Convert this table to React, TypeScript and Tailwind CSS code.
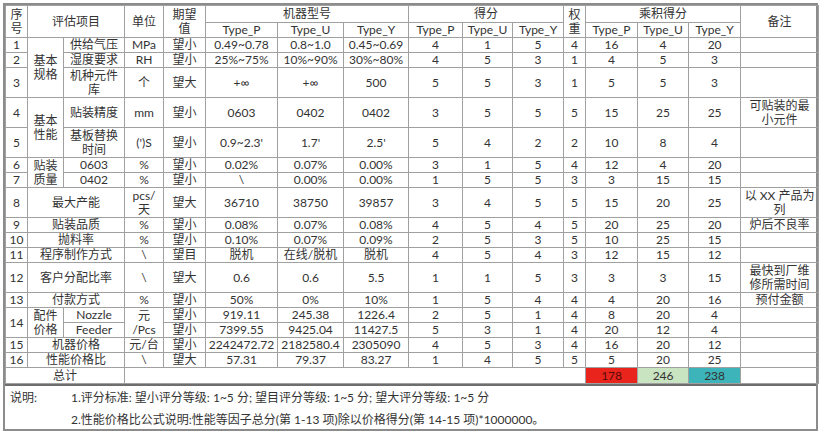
import React from "react";

const FONT = { fontFamily: 'Lato, "Noto Sans CJK SC", sans-serif' };

const td = "border border-[#a0a0a0] p-0 text-center align-middle leading-[14px]";

type Row = {
  no?: string;
  noSpan?: number;
  group?: React.ReactNode;
  groupSpan?: number;
  item: React.ReactNode;
  wide?: boolean;
  unit?: React.ReactNode;
  unitSpan?: number;
  expect: string;
  spec: string[];
  score: string[];
  weight: string;
  prod: string[];
  note?: React.ReactNode;
  tall?: boolean;
};

const rows: Row[] = [
  { no: "1", group: <>基本<br />规格</>, groupSpan: 3, item: "供给气压", unit: "MPa", expect: "望小", spec: ["0.49~0.78", "0.8~1.0", "0.45~0.69"], score: ["4", "1", "5"], weight: "4", prod: ["16", "4", "20"] },
  { no: "2", item: "湿度要求", unit: "RH", expect: "望小", spec: ["25%~75%", "10%~90%", "30%~80%"], score: ["4", "5", "3"], weight: "1", prod: ["4", "5", "3"] },
  { no: "3", item: <>机种元件<br />库</>, unit: "个", expect: "望大", spec: ["+∞", "+∞", "500"], score: ["5", "5", "3"], weight: "1", prod: ["5", "5", "3"], tall: true },
  { no: "4", group: <>基本<br />性能</>, groupSpan: 2, item: "贴装精度", unit: "mm", expect: "望小", spec: ["0603", "0402", "0402"], score: ["3", "5", "5"], weight: "5", prod: ["15", "25", "25"], note: <>可贴装的最<br />小元件</>, tall: true },
  { no: "5", item: <>基板替换<br />时间</>, unit: "(')S", expect: "望小", spec: ["0.9~2.3'", "1.7'", "2.5'"], score: ["5", "4", "2"], weight: "2", prod: ["10", "8", "4"], tall: true },
  { no: "6", group: <>贴装<br />质量</>, groupSpan: 2, item: "0603", unit: "%", expect: "望小", spec: ["0.02%", "0.07%", "0.00%"], score: ["3", "1", "5"], weight: "4", prod: ["12", "4", "20"] },
  { no: "7", item: "0402", unit: "%", expect: "望小", spec: ["\\", "0.00%", "0.00%"], score: ["1", "5", "5"], weight: "3", prod: ["3", "15", "15"] },
  { no: "8", item: "最大产能", wide: true, unit: <>pcs/<br />天</>, expect: "望大", spec: ["36710", "38750", "39857"], score: ["3", "4", "5"], weight: "5", prod: ["15", "20", "25"], note: <>以 XX 产品为<br />列</>, tall: true },
  { no: "9", item: "贴装品质", wide: true, unit: "%", expect: "望小", spec: ["0.08%", "0.07%", "0.08%"], score: ["4", "5", "4"], weight: "5", prod: ["20", "25", "20"], note: "炉后不良率" },
  { no: "10", item: "抛料率", wide: true, unit: "%", expect: "望小", spec: ["0.10%", "0.07%", "0.09%"], score: ["2", "5", "3"], weight: "5", prod: ["10", "25", "15"] },
  { no: "11", item: "程序制作方式", wide: true, unit: "\\", expect: "望目", spec: ["脱机", "在线/脱机", "脱机"], score: ["4", "5", "4"], weight: "3", prod: ["12", "15", "12"] },
  { no: "12", item: "客户分配比率", wide: true, unit: "\\", expect: "望大", spec: ["0.6", "0.6", "5.5"], score: ["1", "1", "5"], weight: "3", prod: ["3", "3", "15"], note: <>最快到厂维<br />修所需时间</>, tall: true },
  { no: "13", item: "付款方式", wide: true, unit: "%", expect: "望小", spec: ["50%", "0%", "10%"], score: ["1", "5", "4"], weight: "4", prod: ["4", "20", "16"], note: "预付金额" },
  { no: "14", noSpan: 2, group: <>配件<br />价格</>, groupSpan: 2, item: "Nozzle", unit: <>元<br />/Pcs</>, unitSpan: 2, expect: "望小", spec: ["919.11", "245.38", "1226.4"], score: ["2", "5", "1"], weight: "4", prod: ["8", "20", "4"] },
  { item: "Feeder", expect: "望小", spec: ["7399.55", "9425.04", "11427.5"], score: ["5", "3", "1"], weight: "4", prod: ["20", "12", "4"] },
  { no: "15", item: "机器价格", wide: true, unit: "元/台", expect: "望小", spec: ["2242472.72", "2182580.4", "2305090"], score: ["4", "5", "3"], weight: "4", prod: ["16", "20", "12"] },
  { no: "16", item: "性能价格比", wide: true, unit: "\\", expect: "望大", spec: ["57.31", "79.37", "83.27"], score: ["1", "4", "5"], weight: "5", prod: ["5", "20", "25"] },
];

const widths = [22, 36, 61, 39, 42, 72, 66, 65, 54, 50, 51, 22, 52, 51, 52, 78];
const types = ["Type_P", "Type_U", "Type_Y"];

function DataRow({ r }: { r: Row }) {
  const h = r.tall ? "h-[30px]" : "h-[15px]";
  return (
    <tr className={h}>
      {r.no && <td rowSpan={r.noSpan} className={td}>{r.no}</td>}
      {r.group && <td rowSpan={r.groupSpan} className={td}>{r.group}</td>}
      <td colSpan={r.wide ? 2 : 1} className={td}>{r.item}</td>
      {r.unit && <td rowSpan={r.unitSpan} className={td}>{r.unit}</td>}
      <td className={td}>{r.expect}</td>
      {r.spec.map((s, i) => <td key={"s" + i} className={td}>{s}</td>)}
      {r.score.map((s, i) => <td key={"c" + i} className={td}>{s}</td>)}
      <td className={td}>{r.weight}</td>
      {r.prod.map((s, i) => <td key={"p" + i} className={td}>{s}</td>)}
      <td className={td}>{r.note}</td>
    </tr>
  );
}

export default function App() {
  return (
    <div className="w-[824px] h-[438px] bg-white text-[12px] text-[#333333] pl-[3px] pt-[3px]" style={FONT}>
      <div className="w-[815px] border-2 border-[#8c8c8c]">
        <table className="w-full border-collapse table-fixed">
          <colgroup>
            {widths.map((w, i) => <col key={i} style={{ width: w }} />)}
          </colgroup>
          <tbody>
            <tr className="h-[17px]">
              <td rowSpan={2} className={td}>序<br />号</td>
              <td rowSpan={2} colSpan={2} className={td}>评估项目</td>
              <td rowSpan={2} className={td}>单位</td>
              <td rowSpan={2} className={td}>期望<br />值</td>
              <td colSpan={3} className={td}>机器型号</td>
              <td colSpan={3} className={td}>得分</td>
              <td rowSpan={2} className={td}>权<br />重</td>
              <td colSpan={3} className={td}>乘积得分</td>
              <td rowSpan={2} className={td}>备注</td>
            </tr>
            <tr className="h-[14px]">
              {types.map((t) => <td key={"a" + t} className={td}>{t}</td>)}
              {types.map((t) => <td key={"b" + t} className={td}>{t}</td>)}
              {types.map((t) => <td key={"c" + t} className={td}>{t}</td>)}
            </tr>
            {rows.map((r, i) => <DataRow key={i} r={r} />)}
            <tr className="h-[16px]">
              <td colSpan={3} className={td}>总计</td>
              <td colSpan={9} className={td}></td>
              <td className={td + " bg-[#e8241d] text-[#5a0a08]"}>178</td>
              <td className={td + " bg-[#c9e4c1]"}>246</td>
              <td className={td + " bg-[#3cb4b9]"}>238</td>
              <td className={td}></td>
            </tr>
          </tbody>
        </table>
        <div className="border-t-2 border-[#6e6e6e] h-[45px] grid grid-cols-[66px_1fr] grid-rows-[23px_22px] items-center">
          <div className="pl-[5px]">说明:</div>
          <div>1.评分标准: 望小评分等级: 1~5 分; 望目评分等级: 1~5 分; 望大评分等级: 1~5 分</div>
          <div></div>
          <div>2.性能价格比公式说明:性能等因子总分(第 1-13 项)除以价格得分(第 14-15 项)*1000000。</div>
        </div>
      </div>
    </div>
  );
}
